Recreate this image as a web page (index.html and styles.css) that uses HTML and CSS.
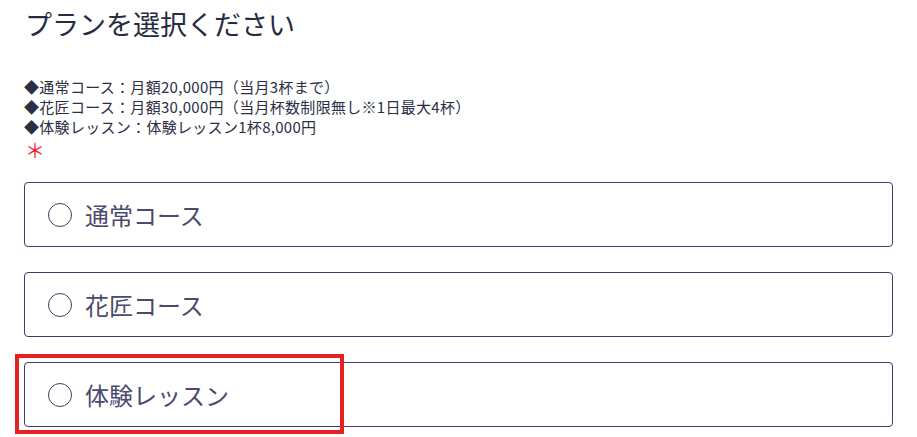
FILE: index.html
```html
<!DOCTYPE html>
<html lang="ja">
<head>
<meta charset="utf-8">
<link rel="stylesheet" href="styles.css">
</head>
<body>
<div class="page">
  <h1 class="title">プランを選択ください</h1>
  <div class="notes">
    <p>◆通常コース：月額20,000円（当月3杯まで）</p>
    <p>◆花匠コース：月額30,000円（当月杯数制限無し※1日最大4杯）</p>
    <p>◆体験レッスン：体験レッスン1杯8,000円</p>
  </div>
  <div class="required">＊</div>
  <div class="options">
    <label class="option"><span class="radio"></span><span class="label">通常コース</span></label>
    <label class="option"><span class="radio"></span><span class="label">花匠コース</span></label>
    <label class="option"><span class="radio"></span><span class="label">体験レッスン</span><span class="mark"></span></label>
  </div>
</div>
</body>
</html>
```

FILE: styles.css
```css
html, body {
  margin: 0;
  padding: 0;
  background: #ffffff;
}
body {
  font-family: "Noto Sans CJK JP", "Noto Sans", sans-serif;
  color: #2a2f45;
  min-height: 437px;
}
.page {
  padding: 0 24px 10px 24px;
}
.title {
  margin: 0;
  padding-top: 4px;
  padding-left: 1px;
  font-size: 27px;
  font-weight: 400;
  line-height: 40px;
  color: #262b40;
}
.notes {
  margin-top: 33px;
  font-size: 15px;
  line-height: 20px;
  letter-spacing: 0.3px;
  color: #2a2f45;
}
.notes p {
  margin: 0;
}
.required {
  margin-top: 3px;
  padding-left: 1px;
  color: #f01e3c;
  font-size: 20px;
  line-height: 20px;
  height: 20px;
}
.options {
  margin-top: 22px;
  display: flex;
  flex-direction: column;
  gap: 25px;
  width: 869px;
}
.option {
  position: relative;
  box-sizing: border-box;
  height: 65px;
  border: 1px solid #3f3d6b;
  border-radius: 4px;
  display: flex;
  align-items: center;
  padding-left: 23px;
  gap: 13px;
}
.radio {
  box-sizing: border-box;
  width: 24px;
  height: 24px;
  border: 1px solid #3c3c5c;
  border-radius: 50%;
  flex: none;
}
.label {
  font-size: 24px;
  line-height: 32px;
  color: #4b4a6d;
}
.mark {
  position: absolute;
  left: -10px;
  top: -9px;
  bottom: -8px;
  width: 329px;
  box-sizing: border-box;
  border: 4px solid #e52222;
}
```
